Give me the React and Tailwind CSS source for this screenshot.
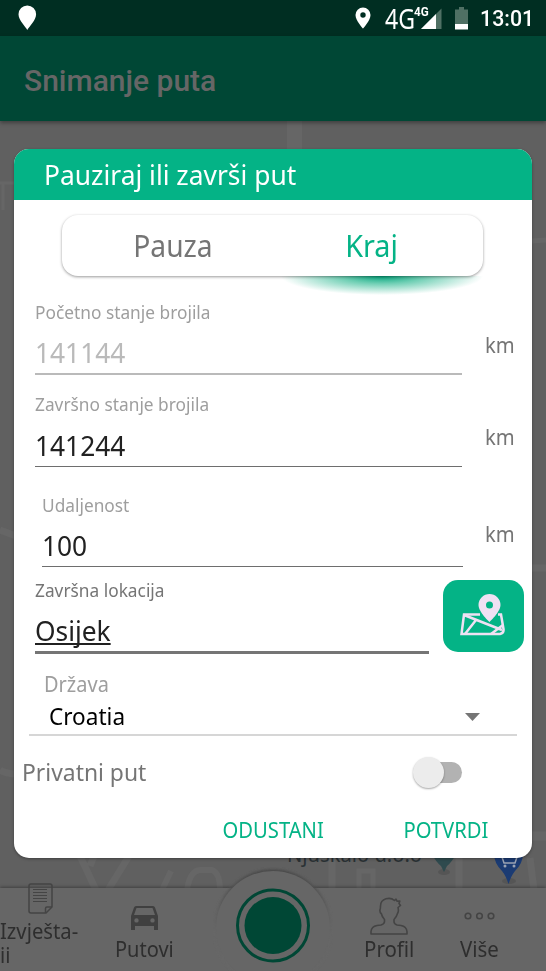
import { useState } from 'react';

function StatusBar() {
  return (
    <div className="flex h-[36px] shrink-0 items-center bg-[#002e22] pl-[18px] pr-[12px] text-white">
      <svg width="19" height="26" viewBox="0 0 19 26" fill="#fff">
        <path d="M9.3 25C7.5 21.500.5 15.500.5 9.300A8.800 8.800 0 0 1 18.100 9.300C18.100 15.500 11.200 21.500 9.300 25Z" />
      </svg>
      <svg className="ml-auto" width="16" height="22" viewBox="0 0 16 22" fill="#fff">
        <path fillRule="evenodd" d="M8 .5A7.500 7.500 0 0 0 .5 8C.5 13.600 8 21.500 8 21.500S15.500 13.600 15.500 8A7.500 7.500 0 0 0 8 .5ZM8 5.300a2.700 2.700 0 1 1 0 5.400a2.700 2.700 0 0 1 0-5.400Z" />
      </svg>
      <span className="ml-[14px] w-[29px] origin-left scale-x-[0.84] pt-px font-['Noto_Sans',sans-serif] text-[27.5px] leading-[36px]">4G</span>
      <div className="relative ml-[7px] h-[21px] w-[21px]">
        <svg width="21" height="21" viewBox="0 0 21 21">
          <path d="M20.500.5V21H0Z" fill="#4f7064" />
          <path d="M15 6V21H0Z" fill="#fff" />
        </svg>
        <span className="absolute left-[-7px] top-[-4px] origin-left scale-x-[0.9] font-['Roboto',sans-serif] text-[13px] font-bold leading-[16px]">4G</span>
      </div>
      <svg className="ml-[13px]" width="13" height="23" viewBox="0 0 13 23">
        <path d="M4 0H9V2.500H13V17H0V2.500H4Z" fill="#4f7064" />
        <path d="M0 17H13V22.500H0Z" fill="#fff" />
      </svg>
      <span className="ml-[12px] w-[54px] origin-left scale-x-[0.97] pt-[2px] font-['Roboto',sans-serif] text-[22px] font-medium leading-[36px]">13:01</span>
    </div>
  );
}

function MapBackground() {
  return (
    <svg className="block" width="546" height="767" viewBox="0 121 546 767">
      <rect y="121" width="546" height="767" fill="#606060" />
      <g fill="none" stroke="#666" strokeWidth="7">
        <path d="M294.500 121V160" strokeWidth="15" />
        <path d="M0 183H20M3 183V210" strokeWidth="3" />
        <path d="M532 241L546 240" strokeWidth="5" />
        <path d="M0 530L16 536" />
        <path d="M530 568H546" />
        <path d="M0 770Q6 774 16 774" />
        <path d="M80 856L96 890M90 866L94 856M129 856L108 890" />
        <path d="M162 890L171 871M187 890Q190 869 202 870H212Q220 873 220 890" strokeWidth="6" />
        <path d="M332 858V890M459 858V890M530 858L534 890" />
        <path d="M359 890V871H373V890" strokeWidth="5" />
        <path d="M530 836H546" strokeWidth="9" />
      </g>
      <text x="287" y="862" fontSize="22" fill="#2b3235" textLength="135" lengthAdjust="spacingAndGlyphs" fontFamily="Noto Sans">Njuškalo d.o.o</text>
      <ellipse cx="444" cy="872" rx="6" ry="3" fill="#555" />
      <path d="M432 854H456Q452 862 447 866L444 872L441 866Q436 862 432 854Z" fill="#2f4a4e" />
      <ellipse cx="509" cy="881" rx="7" ry="3" fill="#555" />
      <path d="M494 854H523Q523 863 515 871Q511 876 508.500 884Q506 876 502 871Q494 863 494 854Z" fill="#1b3b73" />
      <path d="M502 857L504 863H515L517 857M502 857H517" fill="none" stroke="#9aa3b3" strokeWidth="1.500" />
      <circle cx="505" cy="866" r="1.500" fill="#9aa3b3" />
      <circle cx="514" cy="866" r="1.500" fill="#9aa3b3" />
    </svg>
  );
}

function BottomNav() {
  return (
    <div className="relative flex h-[83px] shrink-0 bg-[#666] font-['Noto_Sans',sans-serif] text-[22px] text-[#2e2e2e] shadow-[0_-1px_3px_rgba(0,0,0,0.35)]">
      <div className="w-[80px] pl-[28px]">
        <svg className="-mt-[5px]" width="25" height="31" viewBox="0 0 25 31" fill="none" stroke="#444" strokeWidth="1.500">
          <path d="M3 1H22Q24 1 24 3V24L18 30H3Q1 30 1 28V3Q1 1 3 1Z" />
          <path d="M24 24H19Q17.500 24 17.500 25.500V30" />
          <path d="M5 6.500H19M5 9.500H19M5 12.500H19M5 15.500H19M5 18.500H19" strokeWidth="1" />
        </svg>
        <div className="-ml-[28px] mt-[4px] w-[86px] origin-left scale-x-[0.92] leading-[24px]">Izvješta-<br />ii</div>
      </div>
      <div className="ml-[35px] w-[60px]">
        <svg className="ml-[16px] mt-[18px]" width="27" height="24" viewBox="0 0 27 24" fill="#404040">
          <path fillRule="evenodd" d="M5 0H22Q23.500 0 24 1.500L27 10V24H23V20H4V24H0V10L3 1.500Q3.500 0 5 0ZM5.500 2L3 9H24L21.500 2ZM5.500 12.200a2.200 2.200 0 1 0 0 4.400a2.200 2.200 0 0 0 0-4.400ZM21.500 12.200a2.200 2.200 0 1 0 0 4.400a2.200 2.200 0 0 0 0-4.400Z" />
        </svg>
        <div className="mt-[3px] origin-left scale-x-[0.91] leading-[30px]">Putovi</div>
      </div>
      {/* record button */}
      <svg className="absolute left-[213px] top-[-21px]" width="120" height="104" viewBox="213 867 120 104">
        <defs>
          <filter id="bump" x="-20%" y="-20%" width="140%" height="140%"><feGaussianBlur stdDeviation="1.500" /></filter>
          <linearGradient id="fade" x1="0" y1="0" x2="0" y2="1">
            <stop offset="0" stopColor="#444" />
            <stop offset="0.350" stopColor="#5e5e5e" />
            <stop offset="0.550" stopColor="#666" />
          </linearGradient>
        </defs>
        <circle cx="273" cy="928" r="58.500" fill="url(#fade)" filter="url(#bump)" />
        <circle cx="273" cy="928" r="57" fill="#666" />
        <circle cx="273" cy="925.500" r="35.500" fill="none" stroke="#004735" strokeWidth="3" />
        <circle cx="273" cy="925.500" r="28.500" fill="#004735" />
      </svg>
      <div className="ml-[189px] w-[51px]">
        <svg className="ml-[6px] mt-[9px]" width="38" height="38" viewBox="0 0 38 38" fill="none" stroke="#444" strokeWidth="1.600" strokeLinejoin="round">
          <path d="M1 37V34.500Q1.500 29.500 7 28.500L11 28Q14.500 27 14.500 24.500V22.500Q12 20 11.500 17Q9.500 15.500 10 12.500Q10.500 12 10.500 9Q10.500 3.500 16 1.800Q21 .3 24.500 3.500L26 2.200L27 4.200L29.800 4L29 6.500L30.500 8.500L28 10.500Q29 14 27.500 16.500Q26.500 20 24 22.500V24.500Q24 27 27 28L31 28.500Q36.500 29.500 37 34.500V37Z" />
        </svg>
        <div className="-mt-[2px] origin-left scale-x-[0.93] leading-[30px]">Profil</div>
      </div>
      <div className="ml-[45px] w-[42px]">
        <svg className="ml-[4px] mt-[24px]" width="31" height="8" viewBox="0 0 31 8" fill="none" stroke="#444" strokeWidth="1.600">
          <circle cx="4" cy="4" r="2.800" />
          <circle cx="15.500" cy="4" r="2.800" />
          <circle cx="27" cy="4" r="2.800" />
        </svg>
        <div className="mt-[13px] origin-left scale-x-[0.93] leading-[30px]">Više</div>
      </div>
    </div>
  );
}

function Field({ label, value, unit, className, lineClass, valueClass, labelClass, unitClass }) {
  return (
    <div className={`flex ${className}`}>
      <div className={`box-content h-[73px] shrink-0 ${lineClass}`}>
        <div className={`origin-left scale-x-[0.935] text-[18.5px] leading-[24px] ${labelClass}`}>{label}</div>
        <div className={`mt-[10px] origin-left scale-x-[0.94] text-[28px] leading-[36px] ${valueClass}`}>{value}</div>
      </div>
      {unit && <span className={`h-[30px] origin-left scale-x-[0.92] text-[22px] leading-[30px] text-[#757575] ${unitClass}`}>{unit}</span>}
    </div>
  );
}

function MapButton() {
  return (
    <button className="ml-[14px] mt-[2px] flex h-[72px] w-[81px] items-center justify-center rounded-[15px] bg-[#04b386]">
      <svg className="-mt-[3px] mr-[2px]" width="45" height="42" viewBox="0 0 45 42" fill="none" stroke="#efe1f3" strokeWidth="2.500">
        <path d="M20 20.500H4L1.500 40H40Q44 39 43.500 35L41 20.500H38" />
        <path d="M4 21L42 36M16 26L5 40M43 31L31 40" />
        <path fillRule="evenodd" d="M29.500 0A11 11 0 0 0 18.500 11C18.500 18 29.500 28 29.500 28S40.500 18 40.500 11A11 11 0 0 0 29.500 0ZM29.500 7.500a3.500 3.500 0 1 1 0 7a3.500 3.500 0 0 1 0-7Z" fill="#efe1f3" stroke="none" />
      </svg>
    </button>
  );
}

function TripDialog() {
  const [isPrivate, setIsPrivate] = useState(false)

  return (
    <div className="absolute left-[14px] top-[149px] flex h-[709px] w-[518px] flex-col overflow-hidden rounded-[15px] bg-white font-['Noto_Sans',sans-serif] shadow-[0_1px_3px_rgba(0,0,0,0.35)]">
      <div className="h-[51px] shrink-0 bg-[#04b386] pl-[30px]">
        <h2 className="origin-left scale-x-[0.977] text-[27px] leading-[52px] text-white">Pauziraj ili završi put</h2>
      </div>

      <div className="relative ml-[48px] mt-[15px] h-[61px] w-[421px] shrink-0">
        <div className="absolute left-[219px] top-[61px] h-[19px] w-[202px] bg-[radial-gradient(ellipse_50%_100%_at_50%_0%,#04a57c_0%,#6fcfb4_40%,transparent_100%)]" />
        <div className="relative flex h-full rounded-[16px] bg-white text-[30px] leading-[62px] shadow-[0_1px_3px_rgba(0,0,0,0.4)]">
          <button className="w-[222px] scale-x-[0.94] text-[#757575]">Pauza</button>
          <button className="w-[175px] scale-x-[0.96] text-[#04b386]">Kraj</button>
        </div>
      </div>

      <Field
        label="Početno stanje brojila" value="141144" unit="km"
        className="ml-[21px] mt-[24px]"
        lineClass="w-[427px] border-b-2 border-[#bababa]"
        labelClass="text-[#9e9e9e]" valueClass="text-[#bababa]"
        unitClass="ml-[23px] mt-[29px]"
      />
      <Field
        label="Završno stanje brojila" value="141244" unit="km"
        className="ml-[21px] mt-[18px]"
        lineClass="w-[427px] border-b border-[#6e6e6e]"
        labelClass="-mt-px mb-[11px] text-[#9e9e9e]" valueClass="text-[#212121]"
        unitClass="ml-[23px] mt-[28px]"
      />
      <Field
        label="Udaljenost" value="100" unit="km"
        className="ml-[28px] mt-[26px]"
        lineClass="w-[421px] border-b border-[#6e6e6e]"
        labelClass="text-[#9e9e9e]" valueClass="text-[#212121]"
        unitClass="ml-[22px] mt-[25px]"
      />
      <div className="ml-[21px] mt-[11px] flex">
        <Field
          label="Završna lokacija" value="Osijek"
          lineClass="w-[394px] border-b-3 border-[#757575]"
          labelClass="text-[#757575]"
          valueClass="text-[#212121] underline decoration-2 underline-offset-[2px] [text-decoration-skip-ink:none]"
        />
        <MapButton />
      </div>

      <div className="ml-[15px] mt-[18px] w-[488px] border-b-2 border-[#d6d6d6] pl-[15px]">
        <div className="origin-left scale-x-[0.93] text-[21.5px] leading-[24px] text-[#9e9e9e]">Država</div>
        <div className="mt-[6px] flex h-[32px] items-center pl-[5px] text-[24px] leading-[30px] text-black">
          <span className="-mt-[4px] origin-left scale-x-[0.94]">Croatia</span>
          <svg className="-mt-[2px] ml-auto mr-[37px]" width="15" height="8" viewBox="0 0 15 8">
            <path d="M0 0H15L7.500 8Z" fill="#757575" />
          </svg>
        </div>
      </div>

      <div className="mt-[20px] flex h-[32px] items-center pl-[8px] pr-[70px] text-[24px] text-[#757575]">
        <span className="origin-left scale-x-[0.953]">Privatni put</span>
        <button
          onClick={() => setIsPrivate(!isPrivate)}
          className="relative ml-auto h-[21px] w-[46px] rounded-full bg-[#b2b2b2]"
        >
          <span className={`absolute top-[-5px] h-[31px] w-[31px] rounded-full bg-[#ececec] shadow-[0_1px_2px_rgba(0,0,0,0.35)] ${isPrivate ? 'right-[-3px]' : 'left-[-3px]'}`} />
        </button>
      </div>

      <div className="mt-[27px] flex justify-end gap-[74px] pr-[44px] text-[21.5px] leading-[30px] text-[#04b386]">
        <button className="origin-right scale-x-[0.94]">ODUSTANI</button>
        <button className="origin-right scale-x-[0.94]">POTVRDI</button>
      </div>
    </div>
  );
}

export default function App() {
  return (
    <div className="relative flex h-[971px] w-[546px] flex-col overflow-hidden bg-[#606060]">
      <StatusBar />
      <header className="relative z-10 flex h-[85px] shrink-0 items-center bg-[#004735] pl-[24px] shadow-[0_2px_4px_rgba(0,0,0,0.35)]">
        <h1 className="pt-[3px] font-['Roboto',sans-serif] text-[30px] font-medium text-[#666]">Snimanje puta</h1>
      </header>
      <MapBackground />
      <BottomNav />
      <div className="absolute inset-0 z-20">
        <TripDialog />
      </div>
    </div>
  );
}
